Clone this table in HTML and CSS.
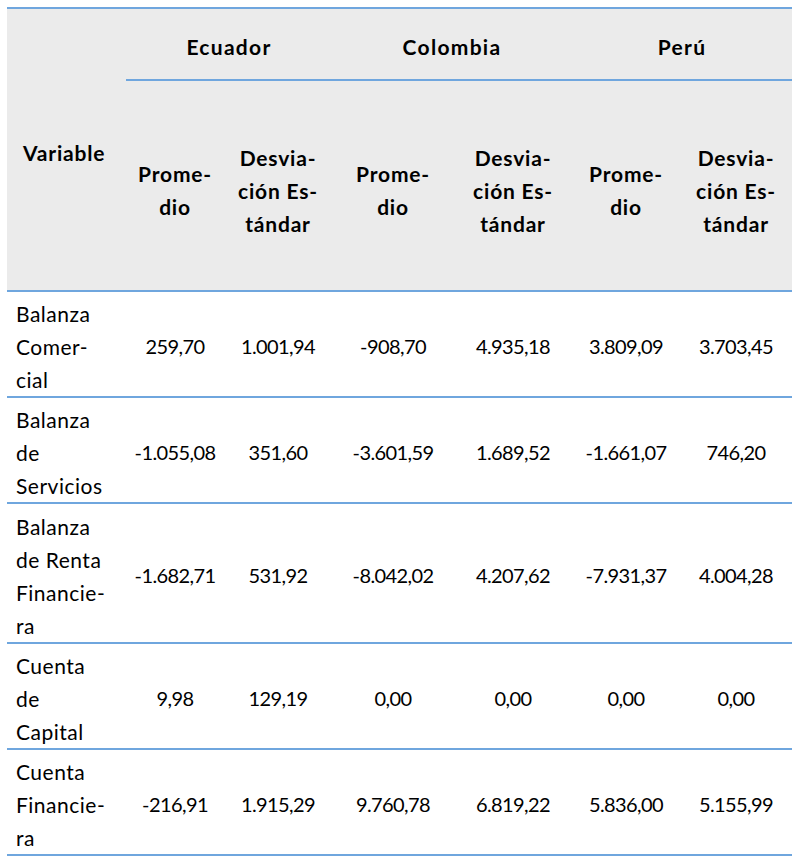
FILE: index.html
```html
<!DOCTYPE html>
<html lang="es">
<head>
<meta charset="utf-8">
<title>Tabla</title>
<link rel="stylesheet" href="styles.css">
</head>
<body>
<div class="wrap">
<table class="stats">
  <colgroup>
    <col class="c-var"><col class="c1"><col class="c2"><col class="c3"><col class="c4"><col class="c5"><col class="c6">
  </colgroup>
  <thead>
    <tr class="h1">
      <th rowspan="2" class="var">Variable</th>
      <th colspan="2" class="country">Ecuador</th>
      <th colspan="2" class="country">Colombia</th>
      <th colspan="2" class="country">Perú</th>
    </tr>
    <tr class="h2">
      <th>Prome-<br>dio</th>
      <th>Desvia-<br>ción Es-<br>tándar</th>
      <th>Prome-<br>dio</th>
      <th>Desvia-<br>ción Es-<br>tándar</th>
      <th>Prome-<br>dio</th>
      <th>Desvia-<br>ción Es-<br>tándar</th>
    </tr>
  </thead>
  <tbody>
    <tr class="r3">
      <td class="name">Balanza<br>Comer-<br>cial</td>
      <td>259,70</td><td>1.001,94</td><td>-908,70</td><td>4.935,18</td><td>3.809,09</td><td>3.703,45</td>
    </tr>
    <tr class="r3">
      <td class="name">Balanza<br>de<br>Servicios</td>
      <td>-1.055,08</td><td>351,60</td><td>-3.601,59</td><td>1.689,52</td><td>-1.661,07</td><td>746,20</td>
    </tr>
    <tr class="r4">
      <td class="name">Balanza<br>de Renta<br>Financie-<br>ra</td>
      <td>-1.682,71</td><td>531,92</td><td>-8.042,02</td><td>4.207,62</td><td>-7.931,37</td><td>4.004,28</td>
    </tr>
    <tr class="r3">
      <td class="name">Cuenta<br>de<br>Capital</td>
      <td>9,98</td><td>129,19</td><td>0,00</td><td>0,00</td><td>0,00</td><td>0,00</td>
    </tr>
    <tr class="r3">
      <td class="name">Cuenta<br>Financie-<br>ra</td>
      <td>-216,91</td><td>1.915,29</td><td>9.760,78</td><td>6.819,22</td><td>5.836,00</td><td>5.155,99</td>
    </tr>
  </tbody>
</table>
</div>
</body>
</html>
```

FILE: styles.css
```css
html, body {
  margin: 0;
  padding: 0;
  background: #ffffff;
}

.wrap {
  padding: 7px 0 0 7px;
}

.stats {
  border-collapse: collapse;
  table-layout: fixed;
  width: 785px;
  font-family: Lato, "Open Sans", sans-serif;
  font-size: 20px;
  line-height: 33px;
  color: #000000;
  border-top: 2px solid #6fa6de;
}

.c-var { width: 119px; }
.c1 { width: 98px; }
.c2 { width: 108px; }
.c3 { width: 122px; }
.c4 { width: 118px; }
.c5 { width: 108px; }
.c6 { width: 112px; }

.stats th,
.stats td {
  padding: 0;
  white-space: nowrap;
  vertical-align: middle;
  text-align: center;
}

.stats thead th {
  background: #ebebeb;
  font-weight: 700;
  font-size: 21px;
  letter-spacing: 0.8px;
}

.stats thead {
  border-bottom: 2px solid #6fa6de;
}

.h1 { height: 72px; }
.h2 { height: 211px; }

.stats th.country {
  border-bottom: 2px solid #6fa6de;
  padding-top: 4px;
  letter-spacing: 1.3px;
}

.stats th.var {
  text-align: left;
  padding-left: 16px;
  padding-top: 5px;
}

.h2 th {
  padding-top: 9px;
}

.stats tbody tr {
  border-bottom: 2px solid #6fa6de;
}

.r3 { height: 106px; }
.r4 { height: 140px; }

.stats td {
  font-weight: 400;
  padding-top: 5px;
  letter-spacing: -0.6px;
}

.stats td.name {
  text-align: left;
  padding-left: 9px;
  font-size: 21px;
  letter-spacing: 0.5px;
}
```
